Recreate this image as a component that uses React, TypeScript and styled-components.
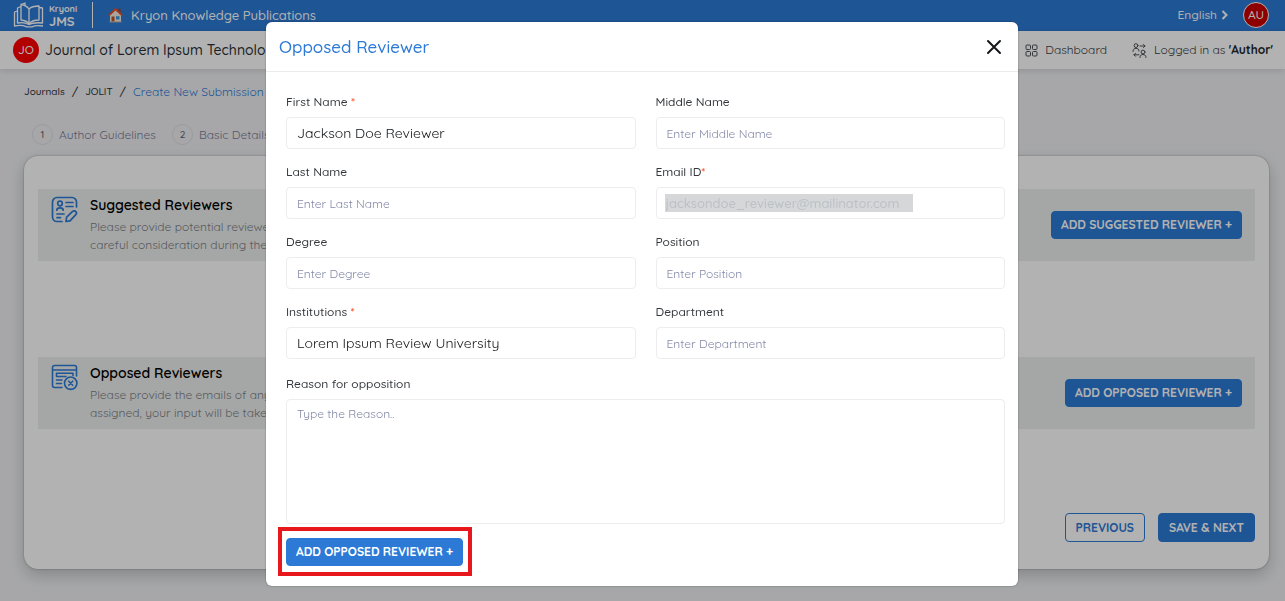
import React from "react";
import styled, { createGlobalStyle, css } from "styled-components";

const GlobalStyle = createGlobalStyle`
  *, *::before, *::after { box-sizing: border-box; }
  body {
    margin: 0;
    background: #eff0f3;
    color: #2b2f33;
    font-family: Quicksand, Lato, "Open Sans", sans-serif;
    font-size: 12px;
    line-height: 18px;
    font-weight: 500;
    overflow: hidden;
  }
  button, input, textarea { font: inherit; }
  h1, h2, p, ol { margin: 0; padding: 0; }
  a { color: inherit; text-decoration: none; }
`;

const blue = "#2c7ad6";

const Page = styled.div`
  min-height: 100vh;
  display: flex;
  flex-direction: column;
`;

const TopBar = styled.header`
  display: flex;
  align-items: center;
  height: 31px;
  padding: 0 16px 2px 13px;
  background: ${blue};
  color: #fff;
`;

const Brand = styled.a`
  display: flex;
  align-items: center;
  gap: 4px;
  padding-right: 15px;
  margin-right: 14px;
  border-right: 1px solid #fff;
  height: 26px;
`;

const BrandName = styled.span`
  display: flex;
  flex-direction: column;
  font-weight: 700;
`;

const BrandTop = styled.span`
  font-size: 9px;
  line-height: 12px;
`;

const BrandBottom = styled.span`
  font-size: 13px;
  line-height: 12px;
`;

const Publisher = styled.a`
  display: flex;
  align-items: center;
  gap: 7px;
  font-size: 13px;
  line-height: 16px;
`;

const Push = styled.div`
  display: flex;
  align-items: center;
  margin-left: auto;
`;

const Language = styled.button`
  display: flex;
  align-items: center;
  gap: 4px;
  padding: 0;
  margin-right: 15px;
  border: 0;
  background: none;
  color: inherit;
`;

const Avatar = styled.span<{ $bordered?: boolean }>`
  display: flex;
  align-items: center;
  justify-content: center;
  width: 26px;
  height: 26px;
  border-radius: 50%;
  background: ${(p) => (p.$bordered ? "#cc0000" : "#ff0000")};
  border: ${(p) => (p.$bordered ? "1px solid #fff" : "0")};
  color: #fff;
`;

const SubBar = styled.div`
  display: flex;
  align-items: center;
  height: 38px;
  padding: 0 12px 0 13px;
  background: #fff;
  box-shadow: 0 2px 6px rgba(0, 0, 0, 0.12);
`;

const JournalName = styled.h1`
  margin-left: 6px;
  font-size: 14px;
  font-weight: 500;
`;

const NavLink = styled.a`
  display: flex;
  align-items: center;
  gap: 7px;
  margin-left: 25px;
  color: #3a3e43;
  font-weight: 400;
  b { color: #24282c; }
`;

const Crumbs = styled.nav`
  display: flex;
  align-items: center;
  gap: 7px;
  padding: 14px 24px 0;
  font-size: 10px;
`;

const CrumbSeparator = styled.span`
  font-size: 12px;
`;

const CurrentCrumb = styled.a`
  color: ${blue};
  font-size: 12px;
  font-weight: 400;
`;

const Steps = styled.ol`
  display: flex;
  gap: 16px;
  padding: 23px 32px 0;
  list-style: none;
  color: #787d98;
  font-weight: 400;
`;

const Step = styled.li`
  display: flex;
  align-items: center;
  gap: 6px;
`;

const StepNumber = styled.span`
  display: flex;
  align-items: center;
  justify-content: center;
  width: 21px;
  height: 21px;
  border: 1px solid #dcdde2;
  border-radius: 50%;
  color: #5c6066;
  font-size: 10px;
  font-weight: 500;
`;

const Card = styled.main`
  display: flex;
  flex-direction: column;
  margin: 11px 16px 32px 24px;
  padding: 33px 14px 27px;
  background: #fff;
  border-radius: 14px;
  box-shadow: 0 6px 16px rgba(0, 0, 0, 0.2), 0 0 2px rgba(0, 0, 0, 0.35);
`;

const Section = styled.section`
  display: flex;
  align-items: flex-start;
  gap: 12px;
  min-height: 72px;
  margin-bottom: 96px;
  padding: 7px 13px;
  background: #edf0ef;
  & + & { margin-bottom: 84px; }
`;

const SectionText = styled.div`
  flex: 1;
  min-width: 0;
  color: #7d8085;
  font-weight: 400;
`;

const SectionTitle = styled.h2`
  margin-bottom: 4px;
  color: #000;
  font-size: 14px;
  font-weight: 600;
`;

const Button = styled.button<{ $outline?: boolean; $middle?: boolean; $tall?: boolean }>`
  height: ${(p) => (p.$tall ? "29px" : "28px")};
  padding: 0 ${(p) => (p.$tall ? "10px" : "9px")};
  border: 1px solid ${blue};
  border-radius: 4px;
  background: ${blue};
  color: #fff;
  font-size: 12px;
  font-weight: 700;
  white-space: nowrap;
  ${(p) => p.$middle && css`align-self: center;`}
  ${(p) => p.$outline && css`background: transparent; color: ${blue};`}
`;

const Actions = styled.div`
  display: flex;
  justify-content: flex-end;
  gap: 13px;
`;

const Backdrop = styled.div`
  position: fixed;
  inset: 0;
  display: flex;
  align-items: flex-start;
  justify-content: center;
  padding: 22px 17px 0 16px;
  background: rgba(0, 0, 0, 0.3);
`;

const Dialog = styled.form`
  width: 100%;
  max-width: 752px;
  background: #fff;
  border-radius: 6px;
  box-shadow: 0 0 2px rgba(0, 0, 0, 0.4);
`;

const DialogHeader = styled.div`
  display: flex;
  align-items: center;
  justify-content: space-between;
  height: 50px;
  padding: 0 16px 0 13px;
  border-bottom: 1px solid #ebebeb;
`;

const DialogTitle = styled.h2`
  color: ${blue};
  font-size: 17px;
  font-weight: 500;
`;

const CloseButton = styled.button`
  display: flex;
  padding: 0;
  border: 0;
  background: none;
  color: #15171a;
`;

const DialogBody = styled.div`
  padding: 22px 13px 10px 20px;
`;

const Fields = styled.div`
  display: grid;
  grid-template-columns: 1fr 1fr;
  gap: 15px 20px;
  margin-bottom: 17px;
`;

const FieldBox = styled.div`
  display: flex;
  flex-direction: column;
  gap: 7px;
`;

const Label = styled.label`
  color: #34383c;
  line-height: 16px;
`;

const Star = styled.span`
  color: #ff4a1c;
`;

const control = css`
  width: 100%;
  border: 1px solid #ededf0;
  border-radius: 4px;
  background: #fff;
  color: #101316;
  font-weight: 400;
  outline: 0;
  &::placeholder { color: #8389a8; font-size: 12px; opacity: 1; }
`;

const Input = styled.input`
  ${control}
  height: 32px;
  padding: 0 10px;
  font-size: ${(p) => (p.defaultValue ? "14px" : "12px")};
`;

const TextArea = styled.textarea`
  ${control}
  display: block;
  height: 125px;
  padding: 5px 10px;
  resize: none;
`;

const EmailFrame = styled.div`
  display: flex;
  align-items: center;
  height: 32px;
  padding: 0 8px;
  border: 1px solid #ededf0;
  border-radius: 4px;
`;

const EmailInput = styled.input`
  width: 248px;
  height: 18px;
  padding: 0 1px;
  border: 0;
  outline: 0;
  background: #d5d7d9;
  color: #bcc0c5;
  font-size: 13px;
`;

const Highlight = styled.div`
  display: flex;
  width: fit-content;
  margin: 3px 0 0 -8px;
  padding: 7px 5px 6px 4px;
  border: 4px solid #e8171b;
`;

function BookLogo() {
  return (
    <svg width="32" height="26" viewBox="0 0 32 26" fill="none" stroke="#fff" strokeWidth="1.3" strokeLinejoin="round">
      <path d="M16 22V7C14 4 11 3 8 2.500V18c4 .3 6.500 1.500 8 4Z" />
      <path d="M16 22c2-3 5-4 10-4V4c-5 0-8 1-10 3" />
      <path d="M8 4.500 4.500 6v15c4.500-1 8-.5 11.500 1.500 3.500-2 8-2 13.500-1.500V6L26 5.500" />
      <path d="M4.500 9 1.500 10v14c5-.9 9-.7 12 .8h5.500c3-1.500 6-1.600 11-.8" />
      <path d="M8 2.500 12 1v3" />
    </svg>
  );
}

function House() {
  return (
    <svg width="17" height="16" viewBox="0 0 16 16">
      <path d="M2.500 7 8 2.500 13.500 7v8h-11Z" fill="#f1ece4" />
      <path d="M11 1.500h2v4h-2Z" fill="#b23c1c" />
      <path d="M8 .8.600 8l1.200 1.200L8 3.600l6.200 5.600L15.400 8Z" fill="#e8501e" />
      <path d="M4 9.500h3V15H4Z" fill="#c0501f" />
      <path d="M8.500 9.200h3.500v3.300H8.500Z" fill="#3f9be0" />
      <path d="M2 14.200h12V15.400H2Z" fill="#c7b9a8" />
    </svg>
  );
}

function GridIcon() {
  return (
    <svg width="13" height="13" viewBox="0 0 13 13" fill="none" stroke="#4b4f54">
      <rect x="1" y="1" width="4.500" height="4.500" rx="1" />
      <rect x="7.500" y="1" width="4.500" height="4.500" rx="1" />
      <rect x="1" y="7.500" width="4.500" height="4.500" rx="1" />
      <rect x="7.500" y="7.500" width="4.500" height="4.500" rx="1" />
    </svg>
  );
}

function SwitchUserIcon() {
  return (
    <svg width="15" height="15" viewBox="0 0 15 15" fill="none" stroke="#4b4f54" strokeLinecap="round" strokeLinejoin="round">
      <circle cx="4" cy="2.600" r="1.900" />
      <path d="M1 8.500c0-2 1.200-3.200 3-3.200S7 6.300 7 8" />
      <circle cx="11" cy="9" r="1.900" />
      <path d="M8 14.500c0-2 1.200-3 3-3s3 1 3 3" />
      <path d="M8 3h5M11.500 1.500 13 3l-1.500 1.500M7 11.800H2M3.500 10.300 2 11.800l1.500 1.500" />
    </svg>
  );
}

function SuggestedIcon() {
  return (
    <svg width="27" height="27" viewBox="0 0 27 27" fill="none" stroke={blue} strokeWidth="1.700" strokeLinecap="round" strokeLinejoin="round">
      <path d="M25.500 11V6a4.500 4.500 0 0 0-4.500-4.500H6A4.500 4.500 0 0 0 1.500 6v15A4.500 4.500 0 0 0 6 25.500h5" />
      <circle cx="9" cy="7.500" r="2.300" />
      <path d="M5.800 14.200c0-1.600 1.300-2.400 3.200-2.400s3.200.8 3.200 2.400M15 6.500h7M15 10.500h7M6 18h7M6 21.700h3.500" />
      <path d="m15 25.500.6-4.300 6-5.800c1-.9 2.400-.7 3.200.2s.9 2.200 0 3.100L19 24.800Z" />
    </svg>
  );
}

function OpposedIcon() {
  return (
    <svg width="27" height="27" viewBox="0 0 27 27" fill="none" stroke={blue} strokeWidth="1.600" strokeLinecap="round" strokeLinejoin="round">
      <path d="M25.500 12V3.500a2 2 0 0 0-2-2h-20a2 2 0 0 0-2 2v18a2 2 0 0 0 2 2H11M1.500 6h24" />
      <path d="M5.500 12.500V9.300h16.500v2.200M5.500 12.500h9.500M5.500 16h5.500M5.500 19.500h5" />
      <circle cx="19.700" cy="19.200" r="6.200" />
      <path d="m17.700 17.200 4 4m0-4-4 4" />
    </svg>
  );
}

type FieldProps = { id: string; label: string; placeholder?: string; value?: string; required?: boolean };

function Field({ id, label, placeholder, value, required }: FieldProps) {
  return (
    <FieldBox>
      <Label htmlFor={id}>
        {label}
        {required && <Star> *</Star>}
      </Label>
      <Input id={id} placeholder={placeholder} defaultValue={value} />
    </FieldBox>
  );
}

export default function App() {
  return (
    <>
      <GlobalStyle />
      <Page>
        <TopBar>
          <Brand href="#">
            <BookLogo />
            <BrandName>
              <BrandTop>Kryoni</BrandTop>
              <BrandBottom>JMS</BrandBottom>
            </BrandName>
          </Brand>
          <Publisher href="#">
            <House />
            Kryon Knowledge Publications
          </Publisher>
          <Push>
            <Language type="button">
              English
              <svg width="7" height="10" viewBox="0 0 7 10" fill="none" stroke="#fff" strokeWidth="2">
                <path d="m1.500 1 4 4-4 4" />
              </svg>
            </Language>
            <Avatar $bordered>AU</Avatar>
          </Push>
        </TopBar>
        <SubBar>
          <Avatar>JO</Avatar>
          <JournalName>Journal of Lorem Ipsum Technology</JournalName>
          <Push>
            <NavLink href="#">
              <GridIcon />
              Dashboard
            </NavLink>
            <NavLink href="#">
              <SwitchUserIcon />
              <span>
                Logged in as <b>'Author'</b>
              </span>
            </NavLink>
          </Push>
        </SubBar>
        <Crumbs>
          <a href="#">Journals</a>
          <CrumbSeparator>/</CrumbSeparator>
          <a href="#">JOLIT</a>
          <CrumbSeparator>/</CrumbSeparator>
          <CurrentCrumb href="#">Create New Submission</CurrentCrumb>
        </Crumbs>
        <Steps>
          <Step>
            <StepNumber>1</StepNumber>Author Guidelines
          </Step>
          <Step>
            <StepNumber>2</StepNumber>Basic Details
          </Step>
        </Steps>
        <Card>
          <Section>
            <SuggestedIcon />
            <SectionText>
              <SectionTitle>Suggested Reviewers</SectionTitle>
              <p>
                Please provide potential reviewers
                <br />
                careful consideration during the
              </p>
            </SectionText>
            <Button type="button" $middle>ADD SUGGESTED REVIEWER +</Button>
          </Section>
          <Section>
            <OpposedIcon />
            <SectionText>
              <SectionTitle>Opposed Reviewers</SectionTitle>
              <p>
                Please provide the emails of any
                <br />
                assigned, your input will be taken
              </p>
            </SectionText>
            <Button type="button" $middle>ADD OPPOSED REVIEWER +</Button>
          </Section>
          <Actions>
            <Button type="button" $outline $tall>PREVIOUS</Button>
            <Button type="button" $tall>SAVE &amp; NEXT</Button>
          </Actions>
        </Card>
      </Page>
      <Backdrop>
        <Dialog role="dialog" aria-labelledby="dialog-title" onSubmit={(e: React.FormEvent) => e.preventDefault()}>
          <DialogHeader>
            <DialogTitle id="dialog-title">Opposed Reviewer</DialogTitle>
            <CloseButton type="button" aria-label="Close">
              <svg width="16" height="16" viewBox="0 0 16 16" fill="none" stroke="currentColor" strokeWidth="2" strokeLinecap="round">
                <path d="m2 2 12 12M14 2 2 14" />
              </svg>
            </CloseButton>
          </DialogHeader>
          <DialogBody>
            <Fields>
              <Field id="first" label="First Name" value="Jackson Doe Reviewer" required />
              <Field id="middle" label="Middle Name" placeholder="Enter Middle Name" />
              <Field id="last" label="Last Name" placeholder="Enter Last Name" />
              <FieldBox>
                <Label htmlFor="email">
                  Email ID<Star>*</Star>
                </Label>
                <EmailFrame>
                  <EmailInput id="email" type="email" defaultValue="jacksondoe_reviewer@mailinator.com" />
                </EmailFrame>
              </FieldBox>
              <Field id="degree" label="Degree" placeholder="Enter Degree" />
              <Field id="position" label="Position" placeholder="Enter Position" />
              <Field id="institutions" label="Institutions" value="Lorem Ipsum Review University" required />
              <Field id="department" label="Department" placeholder="Enter Department" />
            </Fields>
            <FieldBox>
              <Label htmlFor="reason">Reason for opposition</Label>
              <TextArea id="reason" placeholder="Type the Reason.." />
            </FieldBox>
            <Highlight>
              <Button type="submit">ADD OPPOSED REVIEWER +</Button>
            </Highlight>
          </DialogBody>
        </Dialog>
      </Backdrop>
    </>
  );
}
